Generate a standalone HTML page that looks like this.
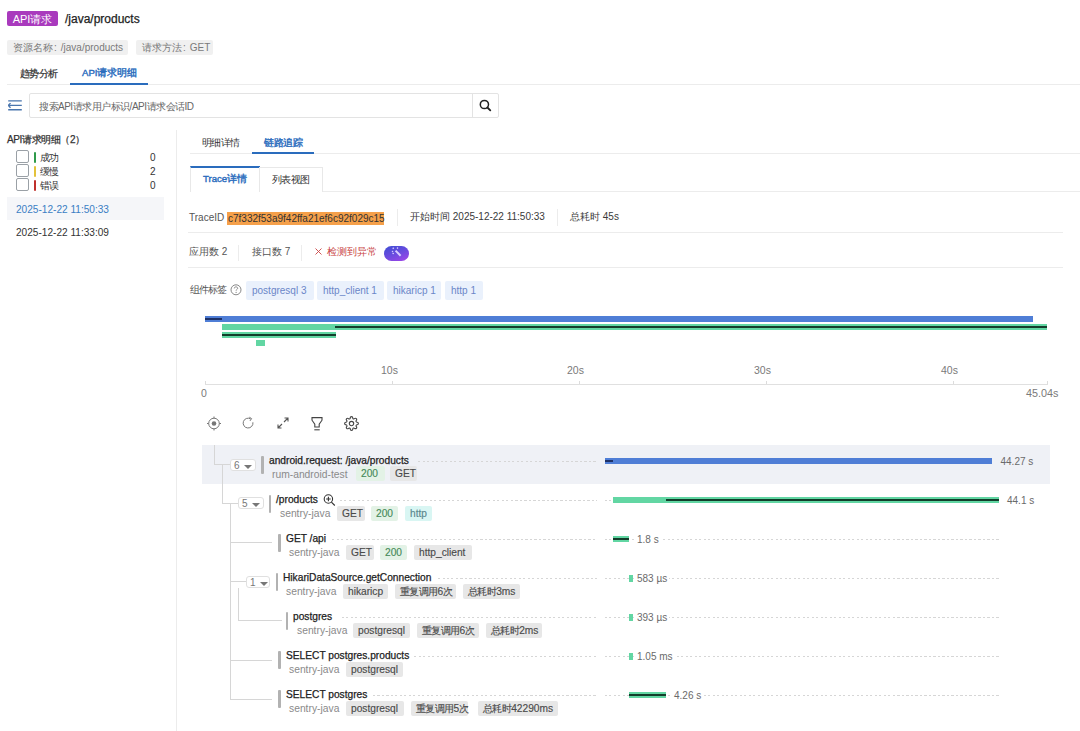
<!DOCTYPE html>
<html><head><meta charset="utf-8">
<style>
*{box-sizing:border-box;margin:0;padding:0}
html,body{width:1080px;height:731px;overflow:hidden;background:#fff}
body{position:relative;font-family:"Liberation Sans",sans-serif;font-size:10px;color:#333}
.a{position:absolute;white-space:nowrap}
.m{-webkit-text-stroke:0.25px currentColor}
.b{-webkit-text-stroke:0.4px currentColor}
.badge{left:7px;top:11px;width:51px;height:15px;background:#a93abd;border-radius:2px;color:#fff;font-size:11px;line-height:16px;text-align:center}
.ttl{left:65px;top:12px;font-size:12px;line-height:15px;color:#222}
.rtag{top:40px;height:15px;line-height:15px;background:#f0f0f0;color:#7a7a7a;padding:0 6px;border-radius:2px;font-size:10px}
.tab{top:67px;line-height:12px;color:#333}
.tabon{color:#2a6cbd}
.hl{height:1px;background:#ececec}
.vl{width:1px;background:#ececec}
.cb{width:12.5px;height:12.5px;border:1px solid #9aa0a6;border-radius:2px;background:#fff}
.bar{width:2.5px;height:11px;border-radius:1.5px}
.ctag{top:281px;height:19px;line-height:19px;background:#eaf1fc;color:#6a86c8;padding:0 6px;border-radius:2px}
.axis{color:#7a7a7a;font-size:10.5px;line-height:12px}
.tk{width:1px;height:3px;background:#dcdcdc;top:381px}
.t1{color:#222;font-size:10.2px;line-height:12px;-webkit-text-stroke:0.25px #222}
.t2{color:#8a8a8a;line-height:12px;font-size:10.3px}
.tg{height:15px;line-height:15px;padding:0 5px;background:#e7e7e7;color:#4a4a4a;border-radius:2px;font-size:10.2px;-webkit-text-stroke:0.15px currentColor}
.tgG{background:#e3f2e6;color:#468a5a}
.tgC{background:#d9f6f3;color:#5a868c}
.gb{width:2.5px;background:#b2b2b2;border-radius:1px}
.sel{border:1px solid #e0e0e0;border-radius:3px;height:12px;color:#777;font-size:10px;line-height:11px;padding-left:3px;background:#fff}
.sel svg{position:absolute;top:4.5px;left:13px}
.tr{background:#d6d6d6}
.dot{height:1px;background:repeating-linear-gradient(90deg,#d6d6d6 0 2px,transparent 2px 4.5px)}
.dur{color:#6a6a6a;font-size:10px;line-height:12px}
.wb{background:#fff;padding:0 2px 0 0}
</style></head><body>

<!-- header -->
<div class="a badge">API请求</div>
<div class="a ttl m">/java/products</div>
<div class="a rtag" style="left:7px;width:121px">资源名称<span style="margin:0 4px 0 1px">:</span>/java/products</div>
<div class="a rtag" style="left:136px;width:77px">请求方法<span style="margin:0 4px 0 1px">:</span>GET</div>

<div class="a tab m" style="left:20px;font-size:10px;letter-spacing:-0.65px;top:67.5px">趋势分析</div>
<div class="a tab tabon b" style="left:82px;font-size:9.6px;top:67px">API请求明细</div>
<div class="a hl" style="left:7px;top:84px;width:1073px"></div>
<div class="a" style="left:70px;top:83px;width:78px;height:2px;background:#2a6cbd"></div>

<!-- search -->
<svg class="a" style="left:8px;top:99px" width="15" height="13" viewBox="0 0 15 13"><g stroke="#4a76ae" stroke-width="1.4" fill="none"><path d="M0.2 1.9H13.8M0.6 6.4H13.8M0.2 10.7H13.8"/><path d="M2.5 4.1L0.4 6.4L2.5 8.7" stroke-linejoin="round"/></g></svg>
<div class="a" style="left:29px;top:93px;width:470px;height:25px;border:1px solid #e3e3e3;border-radius:2px"></div>
<div class="a vl" style="left:472px;top:94px;height:23px;background:#e3e3e3"></div>
<div class="a" style="left:39px;top:101px;color:#666;line-height:12px;font-size:10px;letter-spacing:-0.5px">搜索API请求用户标识/API请求会话ID</div>
<svg class="a" style="left:478px;top:98px" width="14" height="14" viewBox="0 0 14 14"><circle cx="6.4" cy="6.5" r="4.1" stroke="#222" stroke-width="1.5" fill="none"/><path d="M9.4 9.5L12.3 12.4" stroke="#222" stroke-width="1.8" stroke-linecap="round"/></svg>

<!-- left panel -->
<div class="a m" style="left:7px;top:134px;color:#333;line-height:12px;font-size:10px;letter-spacing:-0.4px">API请求明细（2）</div>
<div class="a cb" style="left:16px;top:150px"></div>
<div class="a bar" style="left:33.6px;top:152px;background:#2e9a4a"></div>
<div class="a" style="left:40px;top:152px;line-height:12px;font-size:10px;letter-spacing:-0.8px">成功</div>
<div class="a" style="left:150px;top:152px;line-height:12px">0</div>
<div class="a cb" style="left:16px;top:164px"></div>
<div class="a bar" style="left:33.6px;top:166px;background:#e3c23a"></div>
<div class="a" style="left:40px;top:166px;line-height:12px;font-size:10px;letter-spacing:-0.8px">缓慢</div>
<div class="a" style="left:150px;top:166px;line-height:12px">2</div>
<div class="a cb" style="left:16px;top:178px"></div>
<div class="a bar" style="left:33.6px;top:180px;background:#c0302c"></div>
<div class="a" style="left:40px;top:180px;line-height:12px;font-size:10px;letter-spacing:-0.8px">错误</div>
<div class="a" style="left:150px;top:180px;line-height:12px">0</div>

<div class="a" style="left:7px;top:197px;width:157px;height:23px;background:#f5f6f9"></div>
<div class="a" style="left:16px;top:204px;color:#3b7ec4;line-height:12px;font-size:10.1px">2025-12-22 11:50:33</div>
<div class="a" style="left:16px;top:227px;color:#333;line-height:12px;font-size:10.1px">2025-12-22 11:33:09</div>

<div class="a vl" style="left:176px;top:130px;height:601px"></div>

<!-- right tabs -->
<div class="a" style="left:201.5px;top:136.5px;line-height:12px;font-size:10px;letter-spacing:-0.5px">明细详情</div>
<div class="a tabon b" style="left:264px;top:136.5px;line-height:12px;font-size:10px;letter-spacing:-0.4px">链路追踪</div>
<div class="a hl" style="left:190px;top:153px;width:890px"></div>
<div class="a" style="left:252px;top:152px;width:62px;height:2px;background:#2a6cbd"></div>

<div class="a" style="left:190px;top:166px;width:70px;height:26px;border-top:2px solid #2a6cbd;border-left:1px solid #e8e8e8;background:#fff"></div>
<div class="a" style="left:259px;top:167px;width:64px;height:25px;border:1px solid #e8e8e8;border-bottom:none;background:#fff"></div>
<div class="a hl" style="left:323px;top:191px;width:757px"></div>
<div class="a tabon b" style="left:203px;top:173px;line-height:12px;font-size:9.6px">Trace详情</div>
<div class="a" style="left:272px;top:173.5px;line-height:12px;font-size:10px;letter-spacing:-0.6px">列表视图</div>

<!-- trace info -->
<div class="a" style="left:189px;top:212px;line-height:12px;color:#555">TraceID</div>
<div class="a" style="left:227px;top:212px;width:157px;height:12.5px;background:#f5a04a"></div>
<div class="a" style="left:228px;top:212.5px;line-height:12px;color:#333">c7f332f53a9f42ffa21ef6c92f029c15</div>
<div class="a vl" style="left:397px;top:209px;height:17px"></div>
<div class="a" style="left:410px;top:210.5px;line-height:12px;color:#3a3a3a">开始时间 2025-12-22 11:50:33</div>
<div class="a vl" style="left:557px;top:209px;height:17px"></div>
<div class="a" style="left:570px;top:210.5px;line-height:12px;color:#3a3a3a">总耗时 45s</div>
<div class="a hl" style="left:188px;top:232px;width:875px"></div>

<div class="a" style="left:189px;top:246px;line-height:12px;color:#555">应用数 2</div>
<div class="a vl" style="left:238px;top:245px;height:16px"></div>
<div class="a" style="left:252px;top:246px;line-height:12px;color:#555">接口数 7</div>
<div class="a vl" style="left:301px;top:245px;height:16px"></div>
<svg class="a" style="left:315px;top:248px" width="7" height="7" viewBox="0 0 7 7"><path d="M0.5 0.5L6.5 6.5M6.5 0.5L0.5 6.5" stroke="#c94444" stroke-width="0.9"/></svg>
<div class="a" style="left:327px;top:246px;line-height:12px;color:#c94444;font-size:9.5px">检测到异常</div>
<div class="a" style="left:384px;top:245.5px;width:25px;height:15.5px;border-radius:8px;background:linear-gradient(160deg,#3d4fd3 0%,#6f4ae0 55%,#a444e8 100%)"></div>
<svg class="a" style="left:390px;top:247px" width="13" height="12" viewBox="0 0 13 12"><path d="M5.6 3.6L10.6 8.8" stroke="#d9ccff" stroke-width="2"/><path d="M3.3 0.5v1.6M2.5 1.3h1.6M7.5 0.3v1.5M6.75 1.05h1.5M2.5 3.8v1.4M1.8 4.5h1.4M3.2 5.8v1.4M2.5 6.5h1.4" stroke="#d9ccff" stroke-width="0.8"/></svg>
<div class="a hl" style="left:188px;top:267px;width:875px"></div>

<!-- component tags -->
<div class="a" style="left:190px;top:284px;line-height:12px;color:#555;font-size:10px;letter-spacing:-1px">组件标签</div>
<svg class="a" style="left:230px;top:284px" width="12" height="12" viewBox="0 0 12 12"><circle cx="6" cy="5.8" r="5" stroke="#7a7a7a" stroke-width="0.9" fill="none"/><path d="M4.3 4.4C4.3 3.4 5 2.9 6 2.9S7.7 3.5 7.7 4.3C7.7 5.3 6.1 5.4 6.1 6.6" stroke="#7a7a7a" stroke-width="0.9" fill="none"/><circle cx="6.1" cy="8.4" r="0.55" fill="#7a7a7a"/></svg>
<div class="a ctag" style="left:246px;width:68px">postgresql 3</div>
<div class="a ctag" style="left:317px;width:67px">http_client 1</div>
<div class="a ctag" style="left:387px;width:54px">hikaricp 1</div>
<div class="a ctag" style="left:445px;width:38px">http 1</div>

<!-- minimap -->
<div class="a" style="left:205px;top:316px;width:828px;height:6px;background:#4f7ed6"></div>
<div class="a" style="left:205px;top:318px;width:17px;height:2px;background:#1d3168"></div>
<div class="a" style="left:222px;top:324px;width:825px;height:6px;background:#62d6a3"></div>
<div class="a" style="left:335px;top:326px;width:712px;height:2px;background:#133d2b"></div>
<div class="a" style="left:222px;top:332px;width:114px;height:6px;background:#62d6a3"></div>
<div class="a" style="left:222px;top:334px;width:114px;height:2px;background:#133d2b"></div>
<div class="a" style="left:256px;top:339.5px;width:8.5px;height:6px;background:#62d6a3"></div>

<div class="a hl" style="left:205px;top:384px;width:843px;background:#e0e0e0"></div>
<div class="a tk" style="left:205px"></div>
<div class="a tk" style="left:392px"></div>
<div class="a tk" style="left:579px"></div>
<div class="a tk" style="left:766px"></div>
<div class="a tk" style="left:953px"></div>
<div class="a tk" style="left:1047px"></div>
<div class="a axis" style="left:381px;top:364px">10s</div>
<div class="a axis" style="left:567px;top:364px">20s</div>
<div class="a axis" style="left:754px;top:364px">30s</div>
<div class="a axis" style="left:941px;top:364px">40s</div>
<div class="a axis" style="left:201px;top:387px">0</div>
<div class="a axis" style="left:1026px;top:387px;font-size:10.8px">45.04s</div>

<!-- toolbar -->
<svg class="a" style="left:206px;top:416px" width="16" height="15" viewBox="0 0 16 15"><g stroke="#777" fill="none" stroke-width="1"><circle cx="8" cy="7.5" r="5.3"/><path d="M8 0.5v1.7M8 12.8v1.7M1 7.5h1.7M13.3 7.5h1.7"/></g><circle cx="8" cy="7.5" r="2.3" fill="#777"/></svg>
<svg class="a" style="left:241px;top:416px" width="15" height="15" viewBox="0 0 15 15"><path d="M11.9 6.3A4.9 4.9 0 1 1 9.6 2.9" stroke="#777" stroke-width="1" fill="none"/><path d="M8.3 1.2L10.6 2.6L9 4.9" stroke="#777" stroke-width="1" fill="none"/></svg>
<svg class="a" style="left:276px;top:416px" width="14" height="14" viewBox="0 0 14 14"><g stroke="#555" stroke-width="1.1" fill="none"><path d="M8 6L12 2M8.5 2H12V5.5M6 8L2 12M2 8.5V12H5.5"/></g></svg>
<svg class="a" style="left:310px;top:416px" width="14" height="15" viewBox="0 0 14 15"><g stroke="#444" stroke-width="1.1" fill="none"><path d="M2 1.6H12V4.2L9.2 8.2V11H4.8V8.2L2 4.2Z"/><path d="M4.3 13.8H9.7"/></g></svg>
<svg class="a" style="left:344px;top:416px" width="15" height="15" viewBox="0 0 24 24"><path fill="none" stroke="#444" stroke-width="1.8" d="M12 15.5a3.5 3.5 0 1 0 0-7 3.5 3.5 0 0 0 0 7zM19.4 15a1.65 1.65 0 0 0 .33 1.82l.06.06a2 2 0 1 1-2.83 2.83l-.06-.06a1.65 1.65 0 0 0-1.820-.33 1.65 1.65 0 0 0-1 1.51V21a2 2 0 1 1-4 0v-.09A1.65 1.65 0 0 0 9 19.4a1.65 1.65 0 0 0-1.82.33l-.06.06a2 2 0 1 1-2.83-2.83l.06-.06A1.65 1.65 0 0 0 4.68 15a1.65 1.65 0 0 0-1.51-1H3a2 2 0 1 1 0-4h.09A1.65 1.65 0 0 0 4.6 9a1.65 1.65 0 0 0-.33-1.82l-.06-.06a2 2 0 1 1 2.83-2.83l.06.06A1.65 1.65 0 0 0 9 4.68a1.65 1.65 0 0 0 1-1.51V3a2 2 0 1 1 4 0v.09a1.65 1.65 0 0 0 1 1.51 1.65 1.65 0 0 0 1.82-.33l.06-.06a2 2 0 1 1 2.83 2.83l-.06.06A1.65 1.65 0 0 0 19.4 9a1.65 1.65 0 0 0 1.51 1H21a2 2 0 1 1 0 4h-.09a1.65 1.65 0 0 0-1.51 1z"/></svg>

<!-- tree -->
<div class="a" style="left:202px;top:445px;width:848px;height:39px;background:#eff1f6"></div>
<div class="a tr" style="left:214px;top:445px;width:1px;height:19px"></div>
<div class="a tr" style="left:214px;top:464px;width:17px;height:1px"></div>
<div class="a tr" style="left:222px;top:465px;width:1px;height:39px"></div>
<div class="a tr" style="left:222px;top:503px;width:16px;height:1px"></div>
<div class="a tr" style="left:230px;top:504px;width:1px;height:196px"></div>
<div class="a tr" style="left:230px;top:542px;width:42px;height:1px"></div>
<div class="a tr" style="left:230px;top:581px;width:16px;height:1px"></div>
<div class="a tr" style="left:238px;top:588px;width:1px;height:32px"></div>
<div class="a tr" style="left:238px;top:620px;width:44px;height:1px"></div>
<div class="a tr" style="left:230px;top:660px;width:42px;height:1px"></div>
<div class="a tr" style="left:230px;top:699px;width:42px;height:1px"></div>

<!-- row1 -->
<div class="a sel" style="left:230px;top:459px;width:26px">6<svg width="8" height="4" viewBox="0 0 8 4"><path d="M0 0H8L4 4Z" fill="#777"/></svg></div>
<div class="a gb" style="left:261px;top:456px;height:18px"></div>
<div class="a t1" style="left:269px;top:455px">android.request: /java/products</div>
<div class="a t2" style="left:272px;top:469px">rum-android-test</div>
<div class="a tg tgG" style="left:356px;top:466px;width:29px">200</div>
<div class="a tg" style="left:390px;top:466px;width:27px">GET</div>

<!-- row2 -->
<div class="a sel" style="left:238px;top:497px;width:26px">5<svg width="8" height="4" viewBox="0 0 8 4"><path d="M0 0H8L4 4Z" fill="#777"/></svg></div>
<div class="a gb" style="left:268.5px;top:495px;height:18px"></div>
<div class="a t1" style="left:276px;top:494px">/products</div>
<svg class="a" style="left:323px;top:493px" width="13" height="14" viewBox="0 0 13 14"><g stroke="#333" stroke-width="1.1" fill="none"><circle cx="5.4" cy="6" r="4.2"/><path d="M3.1 6h4.6M5.4 3.7v4.6M8.4 9.1L11.8 12.5"/></g></svg>
<div class="a t2" style="left:280px;top:508px">sentry-java</div>
<div class="a tg" style="left:337px;top:505.5px;width:28px">GET</div>
<div class="a tg tgG" style="left:371px;top:505.5px;width:27px">200</div>
<div class="a tg tgC" style="left:405px;top:505.5px;width:27px">http</div>

<!-- row3 -->
<div class="a gb" style="left:278px;top:534px;height:18px"></div>
<div class="a t1" style="left:286px;top:533px">GET /api</div>
<div class="a t2" style="left:289px;top:547px">sentry-java</div>
<div class="a tg" style="left:346px;top:544.5px;width:28px">GET</div>
<div class="a tg tgG" style="left:380px;top:544.5px;width:27px">200</div>
<div class="a tg" style="left:414px;top:544.5px;width:58px">http_client</div>

<!-- row4 -->
<div class="a sel" style="left:246px;top:576px;width:24px">1<svg width="8" height="4" viewBox="0 0 8 4"><path d="M0 0H8L4 4Z" fill="#777"/></svg></div>
<div class="a gb" style="left:275.5px;top:573px;height:18px"></div>
<div class="a t1" style="left:283px;top:572px">HikariDataSource.getConnection</div>
<div class="a t2" style="left:286px;top:586px">sentry-java</div>
<div class="a tg" style="left:343px;top:583.5px;width:45px">hikaricp</div>
<div class="a tg" style="left:395px;top:583.5px;width:61px"><span style="font-size:10px;letter-spacing:-0.6px">重复调用</span>6<span style="font-size:10px;letter-spacing:-0.6px">次</span></div>
<div class="a tg" style="left:463px;top:583.5px;width:57px"><span style="font-size:10px;letter-spacing:-0.6px">总耗时</span>3ms</div>

<!-- row5 -->
<div class="a gb" style="left:285.5px;top:612px;height:18px"></div>
<div class="a t1" style="left:293px;top:611px">postgres</div>
<div class="a t2" style="left:297px;top:625px">sentry-java</div>
<div class="a tg" style="left:353px;top:622.5px;width:57px">postgresql</div>
<div class="a tg" style="left:417px;top:622.5px;width:62px"><span style="font-size:10px;letter-spacing:-0.6px">重复调用</span>6<span style="font-size:10px;letter-spacing:-0.6px">次</span></div>
<div class="a tg" style="left:486px;top:622.5px;width:56px"><span style="font-size:10px;letter-spacing:-0.6px">总耗时</span>2ms</div>

<!-- row6 -->
<div class="a gb" style="left:278px;top:651px;height:18px"></div>
<div class="a t1" style="left:286px;top:650px">SELECT postgres.products</div>
<div class="a t2" style="left:289px;top:664px">sentry-java</div>
<div class="a tg" style="left:346px;top:661.5px;width:57px">postgresql</div>

<!-- row7 -->
<div class="a gb" style="left:278px;top:690px;height:18px"></div>
<div class="a t1" style="left:286px;top:689px">SELECT postgres</div>
<div class="a t2" style="left:289px;top:703px">sentry-java</div>
<div class="a tg" style="left:346px;top:700.5px;width:58px">postgresql</div>
<div class="a tg" style="left:411px;top:700.5px;width:57px"><span style="font-size:10px;letter-spacing:-0.6px">重复调用</span>5<span style="font-size:10px;letter-spacing:-0.6px">次</span></div>
<div class="a tg" style="left:478px;top:700.5px;width:80px"><span style="font-size:10px;letter-spacing:-0.6px">总耗时</span>42290ms</div>

<!-- timeline dotted lines & bars -->
<div class="a dot" style="left:418px;top:461px;width:179px"></div>
<div class="a" style="left:605px;top:458px;width:387px;height:6px;background:#4f7ed6"></div>
<div class="a" style="left:605px;top:460px;width:8px;height:2px;background:#1d3168"></div>
<div class="a dur" style="left:1000.5px;top:456px">44.27 s</div>

<div class="a dot" style="left:340px;top:500px;width:257px"></div>
<div class="a dot" style="left:605px;top:500px;width:8px"></div>
<div class="a" style="left:613px;top:497px;width:386px;height:6px;background:#62d6a3"></div>
<div class="a" style="left:666px;top:499px;width:333px;height:2px;background:#133d2b"></div>
<div class="a dur" style="left:1007px;top:495px">44.1 s</div>

<div class="a dot" style="left:332px;top:539px;width:265px"></div>
<div class="a dot" style="left:605px;top:539px;width:394px"></div>
<div class="a" style="left:613px;top:536px;width:16px;height:6px;background:#62d6a3"></div>
<div class="a" style="left:613px;top:538px;width:16px;height:2px;background:#133d2b"></div>
<div class="a dur wb" style="left:635px;top:534px;padding-left:2px">1.8 s</div>

<div class="a dot" style="left:438px;top:578px;width:159px"></div>
<div class="a dot" style="left:605px;top:578px;width:394px"></div>
<div class="a" style="left:629px;top:575px;width:3.5px;height:6.5px;background:#62d6a3"></div>
<div class="a dur wb" style="left:635px;top:573px;padding-left:2px">583 µs</div>

<div class="a dot" style="left:342px;top:617px;width:255px"></div>
<div class="a dot" style="left:605px;top:617px;width:394px"></div>
<div class="a" style="left:629px;top:614px;width:3.5px;height:6.5px;background:#62d6a3"></div>
<div class="a dur wb" style="left:635px;top:612px;padding-left:2px">393 µs</div>

<div class="a dot" style="left:414px;top:656px;width:183px"></div>
<div class="a dot" style="left:605px;top:656px;width:394px"></div>
<div class="a" style="left:629px;top:653px;width:3.5px;height:6.5px;background:#62d6a3"></div>
<div class="a dur wb" style="left:635px;top:651px;padding-left:2px">1.05 ms</div>

<div class="a dot" style="left:373px;top:695px;width:224px"></div>
<div class="a dot" style="left:605px;top:695px;width:394px"></div>
<div class="a" style="left:629px;top:692px;width:37px;height:6px;background:#62d6a3"></div>
<div class="a" style="left:629px;top:694px;width:37px;height:2px;background:#133d2b"></div>
<div class="a dur wb" style="left:672px;top:690px;padding-left:2px">4.26 s</div>

</body></html>
